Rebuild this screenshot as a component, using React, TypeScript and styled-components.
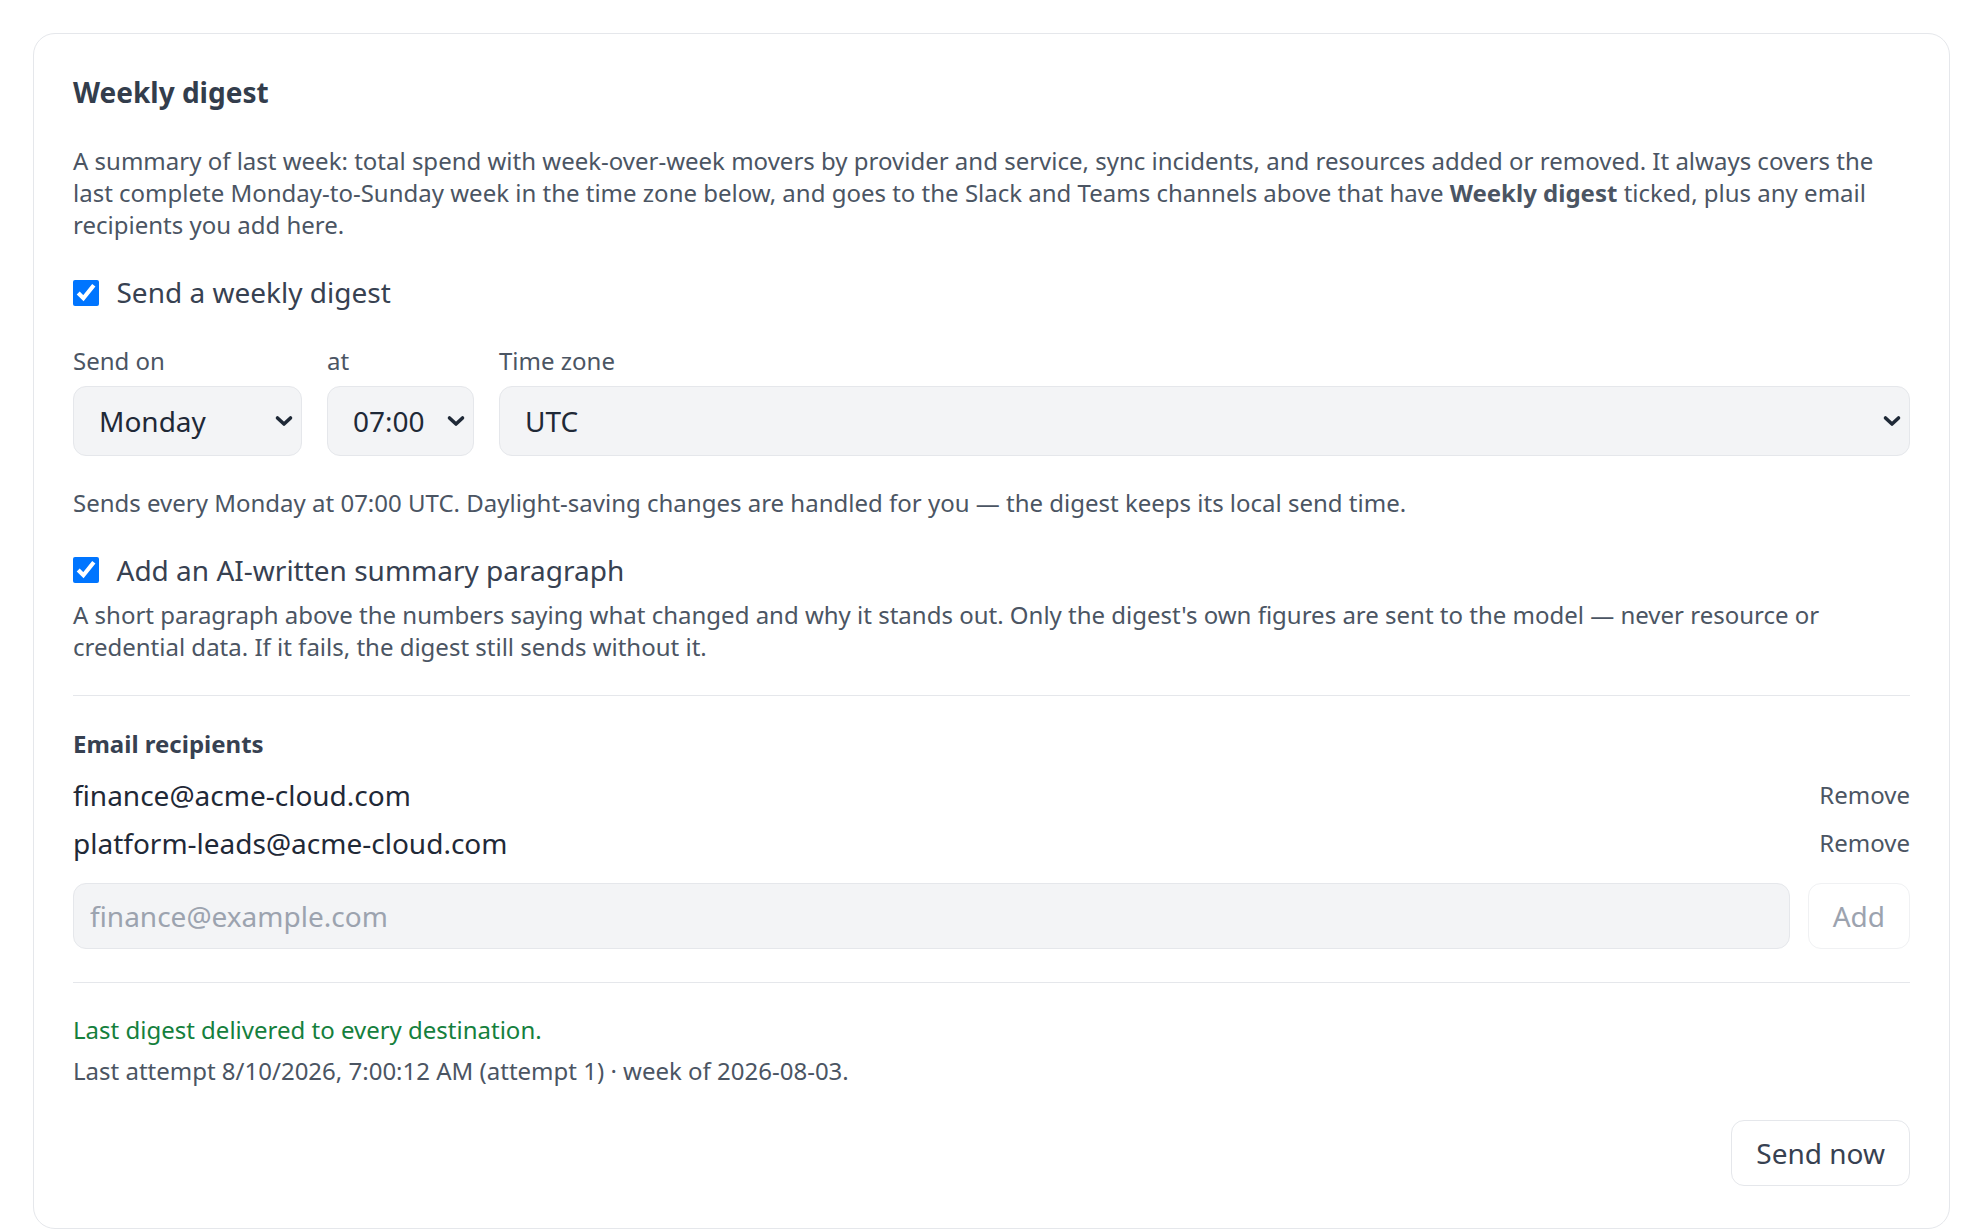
import styled, { createGlobalStyle } from "styled-components";

const GlobalStyle = createGlobalStyle`
    html, body {
        margin: 0;
        padding: 0;
        background: #ffffff;
    }
    body {
        font-family: "Noto Sans", "Open Sans", sans-serif;
        color: #374151;
        -webkit-font-smoothing: antialiased;
    }
    * {
        box-sizing: border-box;
    }
`;

const Page = styled.div`
    padding: 33px 34px 0 33px;
`;

const Card = styled.section`
    border: 1.6px solid #e5e7eb;
    border-radius: 22px;
    padding: 39px 39px 42px 39px;
    background: #ffffff;
`;

const Title = styled.h2`
    margin: 0;
    font-size: 28px;
    line-height: 39px;
    font-weight: 700;
    color: #333d4c;
`;

const Text = styled.p<{ $top?: number }>`
    margin: ${({ $top }) => $top ?? 0}px 0 0;
    font-size: 24px;
    line-height: 32px;
    color: #4b5563;

    strong {
        font-weight: 700;
    }
`;

const CheckRow = styled.label<{ $top: number }>`
    display: flex;
    align-items: center;
    gap: 17.5px;
    margin-top: ${({ $top }) => $top}px;
    font-size: 28px;
    line-height: 39px;
    color: #374151;
    cursor: pointer;

    input {
        width: 26px;
        height: 26px;
        margin: 0;
        flex: none;
    }
`;

const FieldRow = styled.div`
    display: flex;
    gap: 25px;
    margin-top: 33px;
`;

const Field = styled.div<{ $width?: number }>`
    display: flex;
    flex-direction: column;
    gap: 8.5px;
    ${({ $width }) => ($width ? `width: ${$width}px; flex: none;` : "flex: 1;")}
`;

const FieldLabel = styled.span`
    font-size: 24px;
    line-height: 32.5px;
    color: #4b5563;
`;

const SelectWrap = styled.div`
    position: relative;

    svg {
        position: absolute;
        right: 8px;
        top: 50%;
        transform: translateY(-50%);
        pointer-events: none;
    }
`;

const Select = styled.select`
    appearance: none;
    width: 100%;
    height: 70px;
    padding: 0 44px 0 25px;
    font-family: inherit;
    font-size: 28px;
    color: #1f2937;
    background: #f3f4f6;
    border: 1.6px solid #e5e7eb;
    border-radius: 13px;
    outline: none;
`;

const Divider = styled.hr<{ $top: number }>`
    margin: ${({ $top }) => $top}px 0 0;
    border: none;
    border-top: 1.6px solid #e5e7eb;
`;

const SubHeading = styled.h3`
    margin: 32px 0 0;
    font-size: 24px;
    line-height: 32.5px;
    font-weight: 700;
    color: #374151;
`;

const RecipientList = styled.ul`
    list-style: none;
    margin: 16px 0 0;
    padding: 0;
    display: flex;
    flex-direction: column;
    gap: 9px;
`;

const Recipient = styled.li`
    display: flex;
    align-items: center;
    justify-content: space-between;
    font-size: 28px;
    line-height: 39px;
    color: #1f2937;
`;

const LinkButton = styled.button`
    border: none;
    background: none;
    padding: 0;
    font-family: inherit;
    font-size: 24px;
    line-height: 32.5px;
    color: #4b5563;
    cursor: pointer;
`;

const AddRow = styled.div`
    display: flex;
    gap: 18px;
    margin-top: 19.5px;
`;

const EmailInput = styled.input`
    flex: 1;
    height: 66px;
    padding: 0 16px;
    font-family: inherit;
    font-size: 28px;
    color: #1f2937;
    background: #f3f4f6;
    border: 1.6px solid #e5e7eb;
    border-radius: 13px;
    outline: none;

    &::placeholder {
        color: #9ca3af;
    }
`;

const Button = styled.button<{ $muted?: boolean }>`
    height: 66px;
    padding: 0 24px;
    font-family: inherit;
    font-size: 28px;
    color: ${({ $muted }) => ($muted ? "#9ca3af" : "#374151")};
    background: #ffffff;
    border: 1.6px solid ${({ $muted }) => ($muted ? "#f0f1f3" : "#e5e7eb")};
    border-radius: 13px;
    cursor: ${({ $muted }) => ($muted ? "default" : "pointer")};
`;

const Status = styled.p<{ $tone: "ok" | "muted"; $top: number }>`
    margin: ${({ $top }) => $top}px 0 0;
    font-size: 24px;
    line-height: 32px;
    color: ${({ $tone }) => ($tone === "ok" ? "#15803d" : "#4b5563")};
`;

const Footer = styled.div`
    display: flex;
    justify-content: flex-end;
    margin-top: 33.3px;
`;

const Chevron = () => (
    <svg width="20" height="12" viewBox="0 0 20 12" fill="none">
        <path d="M3.5 3 L10 9 L16.5 3" stroke="#1f2937" strokeWidth="3.6" strokeLinecap="round" strokeLinejoin="round" />
    </svg>
);

const Dropdown = ({ value, options }: { value: string; options: string[] }) => (
    <SelectWrap>
        <Select defaultValue={value}>
            {options.map(o => <option key={o} value={o}>{o}</option>)}
        </Select>
        <Chevron />
    </SelectWrap>
);

const days = ["Monday", "Tuesday", "Wednesday", "Thursday", "Friday", "Saturday", "Sunday"];
const hours = Array.from({ length: 24 }, (_, h) => `${String(h).padStart(2, "0")}:00`);
const recipients = ["finance@acme-cloud.com", "platform-leads@acme-cloud.com"];

export default function App() {
    return (
        <>
            <GlobalStyle />
            <Page>
                <Card>
                    <Title>Weekly digest</Title>
                    <Text $top={32.5}>
                        A summary of last week: total spend with week-over-week movers by provider and service, sync incidents, and resources added or removed. It always covers the last complete Monday-to-Sunday week in the time zone below, and goes to the Slack and Teams channels above that have <strong>Weekly digest</strong> ticked, plus any email recipients you add here.
                    </Text>

                    <CheckRow $top={32.5}>
                        <input type="checkbox" defaultChecked />
                        Send a weekly digest
                    </CheckRow>

                    <FieldRow>
                        <Field $width={229}>
                            <FieldLabel>Send on</FieldLabel>
                            <Dropdown value="Monday" options={days} />
                        </Field>
                        <Field $width={147}>
                            <FieldLabel>at</FieldLabel>
                            <Dropdown value="07:00" options={hours} />
                        </Field>
                        <Field>
                            <FieldLabel>Time zone</FieldLabel>
                            <Dropdown value="UTC" options={["UTC", "Europe/London", "America/New_York"]} />
                        </Field>
                    </FieldRow>

                    <Text $top={31.2}>
                        Sends every Monday at 07:00 UTC. Daylight-saving changes are handled for you — the digest keeps its local send time.
                    </Text>

                    <CheckRow $top={31.7}>
                        <input type="checkbox" defaultChecked />
                        Add an AI-written summary paragraph
                    </CheckRow>
                    <Text $top={9}>
                        A short paragraph above the numbers saying what changed and why it stands out. Only the digest's own figures are sent to the model — never resource or credential data. If it fails, the digest still sends without it.
                    </Text>

                    <Divider $top={31.7} />

                    <SubHeading>Email recipients</SubHeading>
                    <RecipientList>
                        {recipients.map(r => (
                            <Recipient key={r}>
                                {r}
                                <LinkButton>Remove</LinkButton>
                            </Recipient>
                        ))}
                    </RecipientList>
                    <AddRow>
                        <EmailInput placeholder="finance@example.com" />
                        <Button $muted disabled>Add</Button>
                    </AddRow>

                    <Divider $top={33} />

                    <Status $tone="ok" $top={31.5}>Last digest delivered to every destination.</Status>
                    <Status $tone="muted" $top={8.8}>Last attempt 8/10/2026, 7:00:12 AM (attempt 1) · week of 2026-08-03.</Status>

                    <Footer>
                        <Button>Send now</Button>
                    </Footer>
                </Card>
            </Page>
        </>
    );
}
